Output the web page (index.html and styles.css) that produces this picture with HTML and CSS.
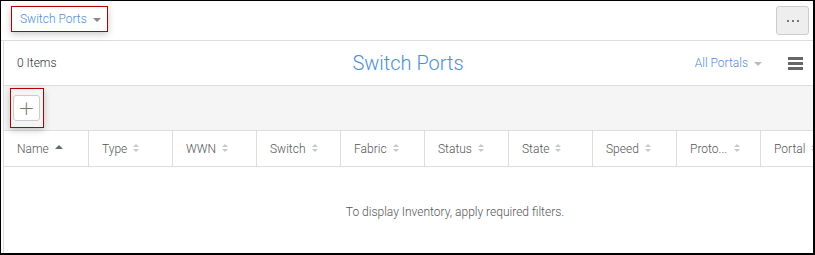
FILE: index.html
```html
<!DOCTYPE html>
<html>
<head>
	<meta charset="utf-8">
	<title>Switch Ports</title>
	<link rel="stylesheet" href="styles.css">
</head>
<body>
	<div class="frame">
		<!--顶部栏-->
		<div class="topbar">
			<div class="mark mark-top">
				<span class="view-name">Switch Ports</span>
				<span class="caret"></span>
			</div>
			<button class="more-btn"><span></span><span></span><span></span></button>
		</div>
		<div class="panel">
			<!--标题栏-->
			<div class="title-row">
				<div class="count">0 Items</div>
				<div class="title">Switch Ports</div>
				<div class="right-tools">
					<span class="portals">All Portals</span>
					<span class="caret caret-light"></span>
					<span class="menu"><i></i><i></i><i></i></span>
				</div>
			</div>
			<!--工具栏-->
			<div class="toolbar">
				<div class="mark mark-add">
					<button class="add-btn">+</button>
				</div>
			</div>
			<!--表格-->
			<div class="grid">
				<div class="head">
					<div class="cell first">Name <span class="sort-up"></span></div>
					<div class="cell">Type <span class="sort"></span></div>
					<div class="cell">WWN <span class="sort"></span></div>
					<div class="cell">Switch <span class="sort"></span></div>
					<div class="cell">Fabric <span class="sort"></span></div>
					<div class="cell">Status <span class="sort"></span></div>
					<div class="cell">State <span class="sort"></span></div>
					<div class="cell">Speed <span class="sort"></span></div>
					<div class="cell"><span class="clip">Proto...</span> <span class="sort"></span></div>
					<div class="cell">Portal <span class="sort"></span></div>
				</div>
				<div class="empty">To display Inventory, apply required filters.</div>
			</div>
		</div>
	</div>
</body>
</html>
```

FILE: styles.css
```css
* {
	margin: 0;
	padding: 0;
	box-sizing: border-box;
}

body {
	font-family: Roboto, "Liberation Sans", sans-serif;
	font-size: 12px;
	color: #444;
	background-color: #fff;
}

.frame {
	width: 815px;
	height: 255px;
	border: 1px solid #000;
	border-right-width: 2px;
	border-bottom-width: 2px;
	overflow: hidden;
	display: flex;
	flex-direction: column;
}

.topbar {
	height: 40px;
	flex: none;
	display: flex;
	align-items: flex-start;
	justify-content: space-between;
	padding: 5px 4px 0 10px;
	border-bottom: 1px solid #ddd;
}

.mark {
	border: 1px solid #b30000;
	box-shadow: 0 2px 7px rgba(0, 0, 0, 0.22);
}

.mark-top {
	width: 97px;
	height: 26px;
	display: flex;
	align-items: center;
	padding-left: 8px;
}

.view-name {
	font-size: 12px;
	font-weight: 300;
	color: #4a8fd6;
}

.caret {
	display: inline-block;
	width: 0;
	height: 0;
	margin-left: 6px;
	margin-top: 2px;
	border-left: 4px solid transparent;
	border-right: 4px solid transparent;
	border-top: 4px solid #888;
}

.caret-light {
	border-top-color: #bbb;
	margin-left: 6px;
}

.more-btn {
	width: 33px;
	height: 29px;
	background-color: #eee;
	border: 1px solid #ccc;
	border-radius: 3px;
	display: flex;
	align-items: center;
	justify-content: center;
	gap: 3px;
}

.more-btn span {
	width: 2px;
	height: 2px;
	background-color: #777;
}

.panel {
	flex: 1;
	margin-left: 2px;
	border-left: 1px solid #ddd;
	display: flex;
	flex-direction: column;
	overflow: hidden;
}

.title-row {
	height: 45px;
	flex: none;
	display: grid;
	grid-template-columns: 1fr auto 1fr;
	align-items: center;
	padding: 0 10px 0 13px;
	border-bottom: 1px solid #ddd;
}

.count {
	color: #333;
	font-size: 12px;
	font-weight: 300;
}

.title {
	font-size: 20px;
	font-weight: 300;
	color: #4a8fd6;
	padding-right: 4px;
}

.right-tools {
	display: flex;
	align-items: center;
	justify-content: flex-end;
}

.portals {
	font-size: 12px;
	font-weight: 300;
	color: #4f8ed6;
}

.menu {
	display: flex;
	flex-direction: column;
	gap: 2px;
	width: 15px;
	margin-left: 26px;
}

.menu i {
	display: block;
	height: 3px;
	background-color: #666;
}

.toolbar {
	height: 45px;
	flex: none;
	background-color: #f5f5f5;
	padding: 2px 0 0 6px;
	border-bottom: 1px solid #ddd;
}

.mark-add {
	width: 34px;
	height: 40px;
	padding: 6px 0 0 2px;
}

.add-btn {
	width: 27px;
	height: 26px;
	background-color: #fff;
	border: 1px solid #ccc;
	border-radius: 3px;
	font-family: "DejaVu Sans", sans-serif;
	font-size: 20px;
	font-weight: 200;
	line-height: 22px;
	color: #777;
}

.grid {
	width: 902px;
	flex: 1;
}

.head {
	height: 36px;
	display: flex;
	border-bottom: 1px solid #ddd;
}

.cell {
	width: 84px;
	flex: none;
	display: flex;
	align-items: center;
	padding-left: 13px;
	border-right: 1px solid #ddd;
	color: #555;
	font-size: 12px;
	font-weight: 300;
}

.cell.first {
	width: 85px;
}

.sort,
.sort-up {
	display: inline-block;
	margin-left: 6px;
	width: 6px;
	height: 9px;
	position: relative;
}

.sort::before,
.sort::after,
.sort-up::before {
	content: "";
	position: absolute;
	left: 0;
	border-left: 3px solid transparent;
	border-right: 3px solid transparent;
}

.sort::before {
	top: 0;
	border-bottom: 3px solid #c8c8c8;
}

.sort::after {
	top: 5px;
	border-top: 3px solid #c8c8c8;
}

.sort-up::before {
	top: 1px;
	border-left-width: 4px;
	border-right-width: 4px;
	border-bottom: 4px solid #666;
}

.clip {
	width: 38px;
}

.empty {
	text-align: center;
	padding-top: 38px;
	color: #555;
	font-size: 12px;
	font-weight: 300;
}
```
